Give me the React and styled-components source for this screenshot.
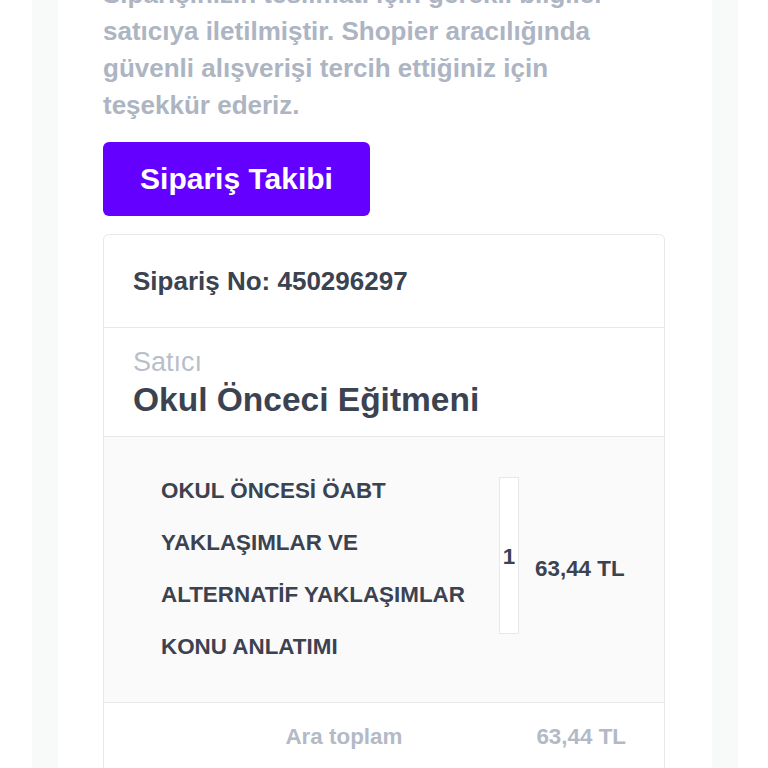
import React from 'react';
import styled, { createGlobalStyle } from "styled-components";

const GlobalStyle = createGlobalStyle`
  html, body {
    margin: 0;
    padding: 0;
    background: #fff;
    overflow: hidden;
  }
  body {
    font-family: "Liberation Sans", Arial, sans-serif;
    -webkit-font-smoothing: antialiased;
  }
`;

const Page = styled.div`
  height: 768px;
  padding: 0 30px 0 32px;
  overflow: hidden;
`;

const Frame = styled.div`
  display: flow-root;
  height: 100%;
  padding: 0 26px;
  background: #f8fafa;
`;

const Sheet = styled.div`
  height: calc(100% + 24px);
  margin-top: -24px;
  padding: 0 47px 0 45px;
  background: #fff;
`;

const Intro = styled.p`
  margin: 0;
  max-width: 515px;
  font-size: 26px;
  font-weight: 700;
  line-height: 37px;
  color: #adb4c2;
`;

const TrackButton = styled.a`
  display: inline-flex;
  align-items: center;
  justify-content: center;
  margin-top: 18px;
  width: 267px;
  height: 74px;
  border-radius: 6px;
  background: #6400ff;
  color: #fff;
  font-size: 30px;
  font-weight: 700;
  text-decoration: none;
`;

const Card = styled.div`
  margin-top: 18px;
  border: 1px solid #e6e8eb;
  border-radius: 6px;
  background: #fff;
  overflow: hidden;
`;

const OrderHead = styled.div`
  display: flex;
  align-items: center;
  height: 92px;
  padding: 0 29px;
  border-bottom: 1px solid #e6e8eb;
  font-size: 26px;
  font-weight: 700;
  color: #3b4250;
`;

const Seller = styled.div`
  padding: 18px 29px 14px;
  border-bottom: 1px solid #e6e8eb;

  .label {
    font-size: 27px;
    line-height: 32px;
    color: #b9bfca;
  }
  .name {
    font-size: 33.5px;
    line-height: 44px;
    font-weight: 700;
    color: #3b4250;
  }
`;

const ItemRow = styled.div`
  display: flex;
  align-items: flex-start;
  padding: 28px 38px 29px 57px;
  background: #fafafa;
  border-bottom: 1px solid #e6e8eb;
  font-size: 22.4px;
  font-weight: 700;
  color: #3b4250;
`;

const ItemName = styled.div`
  width: 330px;
  line-height: 52px;
`;

const Qty = styled.div`
  display: flex;
  align-items: center;
  justify-content: center;
  margin: 12px 0 0 8px;
  width: 20px;
  height: 157px;
  box-sizing: border-box;
  border: 1px solid #e6e8eb;
  background: #fff;
  padding-top: 2px;
`;

const Price = styled.div`
  align-self: center;
  margin-left: 16px;
  color: #3b4250;
`;

const TotalRow = styled.div`
  display: flex;
  justify-content: flex-end;
  align-items: center;
  padding: 17px 38px 20px;
  font-size: 22.4px;
  font-weight: 700;
  line-height: 34px;
  color: #b3bac6;

  .label {
    margin-right: 134px;
  }
`;

const App = () => {
  const order = {
    no: "450296297",
    seller: "Okul Önceci Eğitmeni",
    item: "OKUL ÖNCESİ ÖABT YAKLAŞIMLAR VE ALTERNATİF YAKLAŞIMLAR KONU ANLATIMI",
    qty: 1,
    price: "63,44 TL",
  };

  return (
    <>
      <GlobalStyle />
      <Page>
        <Frame>
          <Sheet>
            <Intro>
              Siparişinizin teslimatı için gerekli bilgiler satıcıya
              iletilmiştir. Shopier aracılığında güvenli alışverişi tercih
              ettiğiniz için teşekkür ederiz.
            </Intro>

            <TrackButton href="#">Sipariş Takibi</TrackButton>

            <Card>
              <OrderHead>Sipariş No: {order.no}</OrderHead>

              <Seller>
                <div className="label">Satıcı</div>
                <div className="name">{order.seller}</div>
              </Seller>

              <ItemRow>
                <ItemName>{order.item}</ItemName>
                <Qty>{order.qty}</Qty>
                <Price>{order.price}</Price>
              </ItemRow>

              <TotalRow>
                <span className="label">Ara toplam</span>
                <span>{order.price}</span>
              </TotalRow>
            </Card>
          </Sheet>
        </Frame>
      </Page>
    </>
  );
};

export default App;
